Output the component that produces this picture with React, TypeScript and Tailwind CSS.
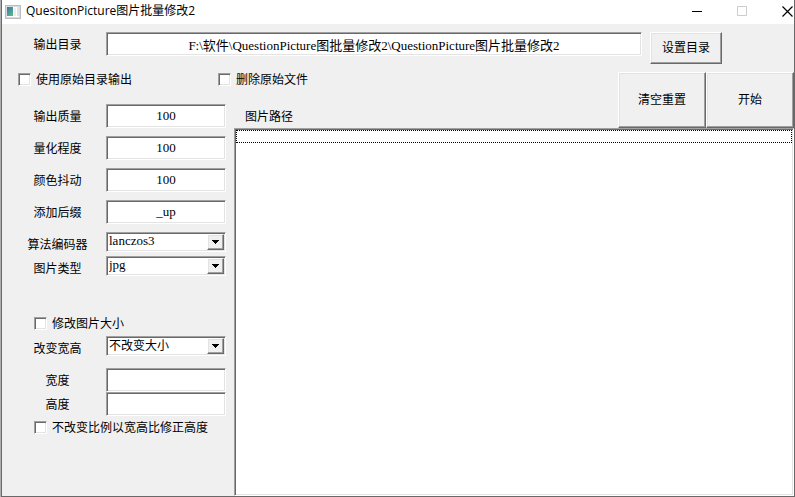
import { useState } from "react";
import type { ReactNode } from "react";

const sunken =
  "border border-t-[#a0a0a0] border-l-[#a0a0a0] border-r-white border-b-white bg-white shadow-[inset_1px_1px_#696969,inset_-1px_-1px_#e3e3e3] outline-none";
const raised =
  "border border-t-white border-l-white border-r-[#696969] border-b-[#696969] bg-[#f0f0f0] shadow-[inset_-1px_-1px_#a0a0a0,inset_1px_1px_#e3e3e3]";
const serif = "text-[13px] font-['Liberation_Serif','Noto_Sans_CJK_SC',serif]";

function AppIcon() {
  return (
    <svg width="16" height="14" viewBox="0 0 16 14" aria-hidden="true">
      <defs>
        <linearGradient id="pane" x1="0" y1="0" x2="0.6" y2="1">
          <stop offset="0" stopColor="#3f74b5" />
          <stop offset="0.5" stopColor="#4593a3" />
          <stop offset="1" stopColor="#58b584" />
        </linearGradient>
      </defs>
      <rect x="0.5" y="0.5" width="15" height="13" fill="#d9dcdf" stroke="#b9bdc1" />
      <rect x="2" y="2" width="12" height="10" fill="#fff" />
      <rect x="2" y="2" width="6" height="9" fill="url(#pane)" />
      <rect x="9" y="3" width="2" height="8" fill="#eceef0" />
      <rect x="12" y="2" width="2" height="9" fill="#dfe3e6" />
    </svg>
  );
}

function TitleBar() {
  return (
    <header className="flex h-6 items-center bg-white pl-[3px] pr-px">
      <AppIcon />
      <h1 className="ml-[5px] flex-1 pb-0.5 text-xs font-['Open_Sans','Noto_Sans_CJK_SC',sans-serif]">
        QuesitonPicture图片批量修改2
      </h1>
      <div className="flex gap-[35px] pb-0.5">
        <button type="button" aria-label="最小化">
          <svg width="10" height="11" viewBox="0 0 10 11" stroke="#000">
            <path d="M0 5.5h10" />
          </svg>
        </button>
        <button type="button" aria-label="最大化" disabled>
          <svg width="10" height="11" viewBox="0 0 10 11" fill="none" stroke="#ccc">
            <path d="M0.5 0.5h9v9h-9z" />
          </svg>
        </button>
        <button type="button" aria-label="关闭">
          <svg width="11" height="11" viewBox="0 0 11 11" stroke="#000" strokeWidth="1.2">
            <path d="M0.5 0.5l10 10M10.5 0.5l-10 10" />
          </svg>
        </button>
      </div>
    </header>
  );
}

function Row({ id, label, children }: { id: string; label: string; children: ReactNode }) {
  return (
    <div className="flex h-6 items-start">
      <label htmlFor={id} className="w-[104px] pl-[7px] text-center leading-6">
        {label}
      </label>
      {children}
    </div>
  );
}

function TextRow({ id, label, value = "" }: { id: string; label: string; value?: string }) {
  return (
    <Row id={id} label={label}>
      <input id={id} type="text" defaultValue={value} className={`h-6 w-[120px] text-center ${sunken} ${serif}`} />
    </Row>
  );
}

function SelectRow({ id, label, options, latin }: { id: string; label: string; options: string[]; latin?: boolean }) {
  return (
    <Row id={id} label={label}>
      <div className="relative">
        <select
          id={id}
          className={`block h-5 w-[120px] appearance-none pl-0.5 pr-5 pb-0.5 leading-4 ${sunken} ${latin ? serif : "text-xs"}`}
        >
          {options.map((option) => (
            <option key={option}>{option}</option>
          ))}
        </select>
        <span className={`pointer-events-none absolute top-0.5 right-0.5 flex h-4 w-[17px] items-center justify-center ${raised}`}>
          <svg width="7" height="4" viewBox="0 0 7 4" aria-hidden="true" shapeRendering="crispEdges">
            <path d="M0 0h7v1h-7zM1 1h5v1h-5zM2 2h3v1h-3zM3 3h1v1h-1z" />
          </svg>
        </span>
      </div>
    </Row>
  );
}

function Check({ label, className = "" }: { label: string; className?: string }) {
  return (
    <label className={`flex items-center gap-[5px] whitespace-nowrap ${className}`}>
      <input type="checkbox" className={`size-[13px] appearance-none checked:bg-black ${sunken}`} />
      {label}
    </label>
  );
}

export default function App() {
  const [path, setPath] = useState("F:\\软件\\QuestionPicture图批量修改2\\QuestionPicture图片批量修改2");

  return (
    <div className="flex min-h-screen bg-[#b0b0b0] pl-px text-xs text-black font-['Noto_Sans_CJK_SC',sans-serif]">
      <main className="flex flex-1 flex-col border border-t-0 border-[#696969] bg-[#f0f0f0]">
        <TitleBar />

        <div className="flex h-12 items-start pt-2 pr-[72px]">
          <label htmlFor="output" className="w-[104px] pl-[7px] text-center leading-6">
            输出目录
          </label>
          <input
            id="output"
            type="text"
            value={path}
            onChange={(e) => setPath(e.target.value)}
            className={`mr-2 h-6 min-w-0 flex-1 text-center ${sunken} ${serif}`}
          />
          <button type="button" className={`h-8 w-[72px] pb-0.5 ${raised}`}>
            设置目录
          </button>
        </div>

        <div className="grid flex-1 grid-cols-[216px_16px_1fr_auto] grid-rows-[32px_24px_1fr]">
          <Check label="使用原始目录输出" className="col-start-1 row-start-1 h-3.5 pl-4" />
          <Check label="删除原始文件" className="col-span-2 col-start-2 row-start-1 h-3.5" />

          <div className="col-start-4 row-span-2 row-start-1 flex">
            <button type="button" className={`w-[88px] pb-0.5 ${raised}`}>
              清空重置
            </button>
            <button type="button" className={`w-[88px] pb-0.5 ${raised}`}>
              开始
            </button>
          </div>

          <form className="col-span-2 col-start-1 row-span-2 row-start-2">
            <div className="flex flex-col gap-2">
              <TextRow id="quality" label="输出质量" value="100" />
              <TextRow id="quantize" label="量化程度" value="100" />
              <TextRow id="dither" label="颜色抖动" value="100" />
              <TextRow id="suffix" label="添加后缀" value="_up" />
            </div>
            <div className="mt-2">
              <SelectRow id="encoder" label="算法编码器" options={["lanczos3"]} latin />
              <SelectRow id="format" label="图片类型" options={["jpg"]} latin />
            </div>
            <div className="mt-8">
              <Check label="修改图片大小" className="h-6 pb-0.5 pl-8" />
              <SelectRow id="resize" label="改变宽高" options={["不改变大小"]} />
            </div>
            <div className="mt-2">
              <TextRow id="width" label="宽度" />
              <TextRow id="height" label="高度" />
              <Check label="不改变比例以宽高比修正高度" className="h-6 pb-0.5 pl-8" />
            </div>
          </form>

          <h2 id="paths" className="col-start-3 row-start-2 pl-[11px] leading-6">
            图片路径
          </h2>
          <ul aria-labelledby="paths" className={`col-span-2 col-start-3 row-start-3 p-px ${sunken}`}>
            <li className="h-[13px] border border-dotted border-black" />
          </ul>
        </div>
      </main>
    </div>
  );
}
